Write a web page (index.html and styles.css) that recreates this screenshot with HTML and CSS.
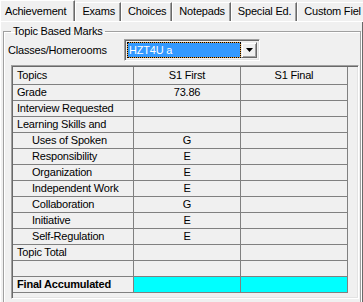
FILE: index.html
```html
<!DOCTYPE html>
<html lang="en">

<head>
    <meta charset="UTF-8">
    <title>Achievement</title>
    <link rel="stylesheet" href="styles.css">
</head>

<body>
    <div class="tabs">
        <div class="tab active">Achievement</div>
        <div class="tab">Exams</div>
        <div class="tab">Choices</div>
        <div class="tab">Notepads</div>
        <div class="tab">Special Ed.</div>
        <div class="tab last">Custom Fiel</div>
    </div>

    <div class="page">
        <fieldset class="group">
            <legend>Topic Based Marks</legend>

            <div class="class-row">
                <label class="class-label">Classes/Homerooms</label>
                <div class="combo">
                    <div class="combo-text">HZT4U a</div>
                    <div class="combo-btn">
                        <svg width="7" height="4" viewBox="0 0 7 4"><polygon points="0,0 7,0 3.5,4" fill="#000"/></svg>
                    </div>
                </div>
            </div>

            <div class="grid-frame">
                <div class="grid">
                    <div class="cell head">Topics</div>
                    <div class="cell head center">S1 First</div>
                    <div class="cell head center">S1 Final</div>

                    <div class="cell">Grade</div>
                    <div class="cell center">73.86</div>
                    <div class="cell"></div>

                    <div class="cell">Interview Requested</div>
                    <div class="cell"></div>
                    <div class="cell"></div>

                    <div class="cell">Learning Skills and</div>
                    <div class="cell"></div>
                    <div class="cell"></div>

                    <div class="cell sub">Uses of Spoken</div>
                    <div class="cell center">G</div>
                    <div class="cell"></div>

                    <div class="cell sub">Responsibility</div>
                    <div class="cell center">E</div>
                    <div class="cell"></div>

                    <div class="cell sub">Organization</div>
                    <div class="cell center">E</div>
                    <div class="cell"></div>

                    <div class="cell sub">Independent Work</div>
                    <div class="cell center">E</div>
                    <div class="cell"></div>

                    <div class="cell sub">Collaboration</div>
                    <div class="cell center">G</div>
                    <div class="cell"></div>

                    <div class="cell sub">Initiative</div>
                    <div class="cell center">E</div>
                    <div class="cell"></div>

                    <div class="cell sub">Self-Regulation</div>
                    <div class="cell center">E</div>
                    <div class="cell"></div>

                    <div class="cell">Topic Total</div>
                    <div class="cell"></div>
                    <div class="cell"></div>

                    <div class="cell"></div>
                    <div class="cell"></div>
                    <div class="cell"></div>

                    <div class="cell bold">Final Accumulated</div>
                    <div class="cell total"></div>
                    <div class="cell total"></div>
                </div>
            </div>
        </fieldset>
    </div>
</body>

</html>
```

FILE: styles.css
```css
body {
    margin: 0;
    width: 363px;
    height: 302px;
    overflow: hidden;
    background-color: #f0f0f0;
    font-family: "Liberation Sans", Arial, sans-serif;
    font-size: 11px;
    letter-spacing: -0.2px;
    color: #000;
}

/* tab strip */
.tabs {
    display: flex;
    align-items: flex-end;
    height: 21px;
    border-bottom: 1px solid #fff;
    white-space: nowrap;
    overflow: hidden;
}

.tab {
    box-sizing: border-box;
    height: 19px;
    line-height: 17px;
    padding: 0 5px 0 6px;
    border-top: 1px solid #fff;
    border-left: 1px solid #fff;
    border-right: 1px solid #696969;
    box-shadow: inset -1px 0 #a0a0a0;
}

.tab.active {
    position: relative;
    height: 22px;
    line-height: 20px;
    margin-bottom: -1px;
    padding: 0 8px 0 4px;
    background-color: #f0f0f0;
}

.tab.last {
    border-right: none;
    box-shadow: none;
}

/* tab page */
.page {
    border-left: 1px solid #fff;
    border-right: 1px solid #696969;
    padding: 3px 1px 0 2px;
}

.group {
    margin: 0;
    padding: 0 4px 8px 4px;
    min-width: 0;
    border: 1px solid #a0a0a0;
    box-shadow: inset 1px 1px #fff, 1px 1px #fff;
}

.group legend {
    margin-left: 3px;
    padding: 0 2px;
    line-height: 13px;
}

.class-row {
    display: flex;
    align-items: center;
    margin-top: 1px;
}

.class-label {
    width: 116px;
}

.combo {
    box-sizing: border-box;
    display: flex;
    width: 136px;
    height: 22px;
    padding: 2px;
    border: 1px solid;
    border-color: #a0a0a0 #fff #fff #a0a0a0;
    box-shadow: inset 1px 1px #696969, inset -1px -1px #e3e3e3;
}

.combo-text {
    flex: 1;
    box-sizing: border-box;
    height: 16px;
    line-height: 14px;
    padding-left: 1px;
    color: #fff;
    background-color: #3399ff;
    border: 1px solid #e8a040;
    outline: 1px dotted #000;
    outline-offset: -1px;
}

.combo-btn {
    box-sizing: border-box;
    width: 16px;
    height: 16px;
    display: flex;
    align-items: center;
    justify-content: center;
    border: 1px solid;
    border-color: #f0f0f0 #696969 #696969 #f0f0f0;
    box-shadow: inset 1px 1px #fff, inset -1px -1px #a0a0a0;
}

/* string grid */
.grid-frame {
    box-sizing: border-box;
    width: 348px;
    height: 234px;
    margin: 4px 0 0 3px;
    border: 1px solid;
    border-color: #a0a0a0 #fff #fff #a0a0a0;
    box-shadow: inset 1px 1px #696969, inset -1px -1px #e3e3e3;
    padding: 1px 0 0 1px;
}

.grid {
    display: grid;
    grid-template-columns: 121px 107px 107px;
    grid-auto-rows: 16px;
    grid-template-rows: 18px;
}

.cell {
    box-sizing: border-box;
    border-right: 1px solid #808080;
    border-bottom: 1px solid #808080;
    padding-left: 4px;
    line-height: 15px;
    white-space: nowrap;
    overflow: hidden;
}

.cell.head {
    line-height: 17px;
}

.cell.center {
    padding-left: 0;
    text-align: center;
}

.cell.sub {
    padding-left: 19px;
}

.cell.bold {
    font-weight: bold;
}

.cell.total {
    background-color: #00ffff;
}
```
